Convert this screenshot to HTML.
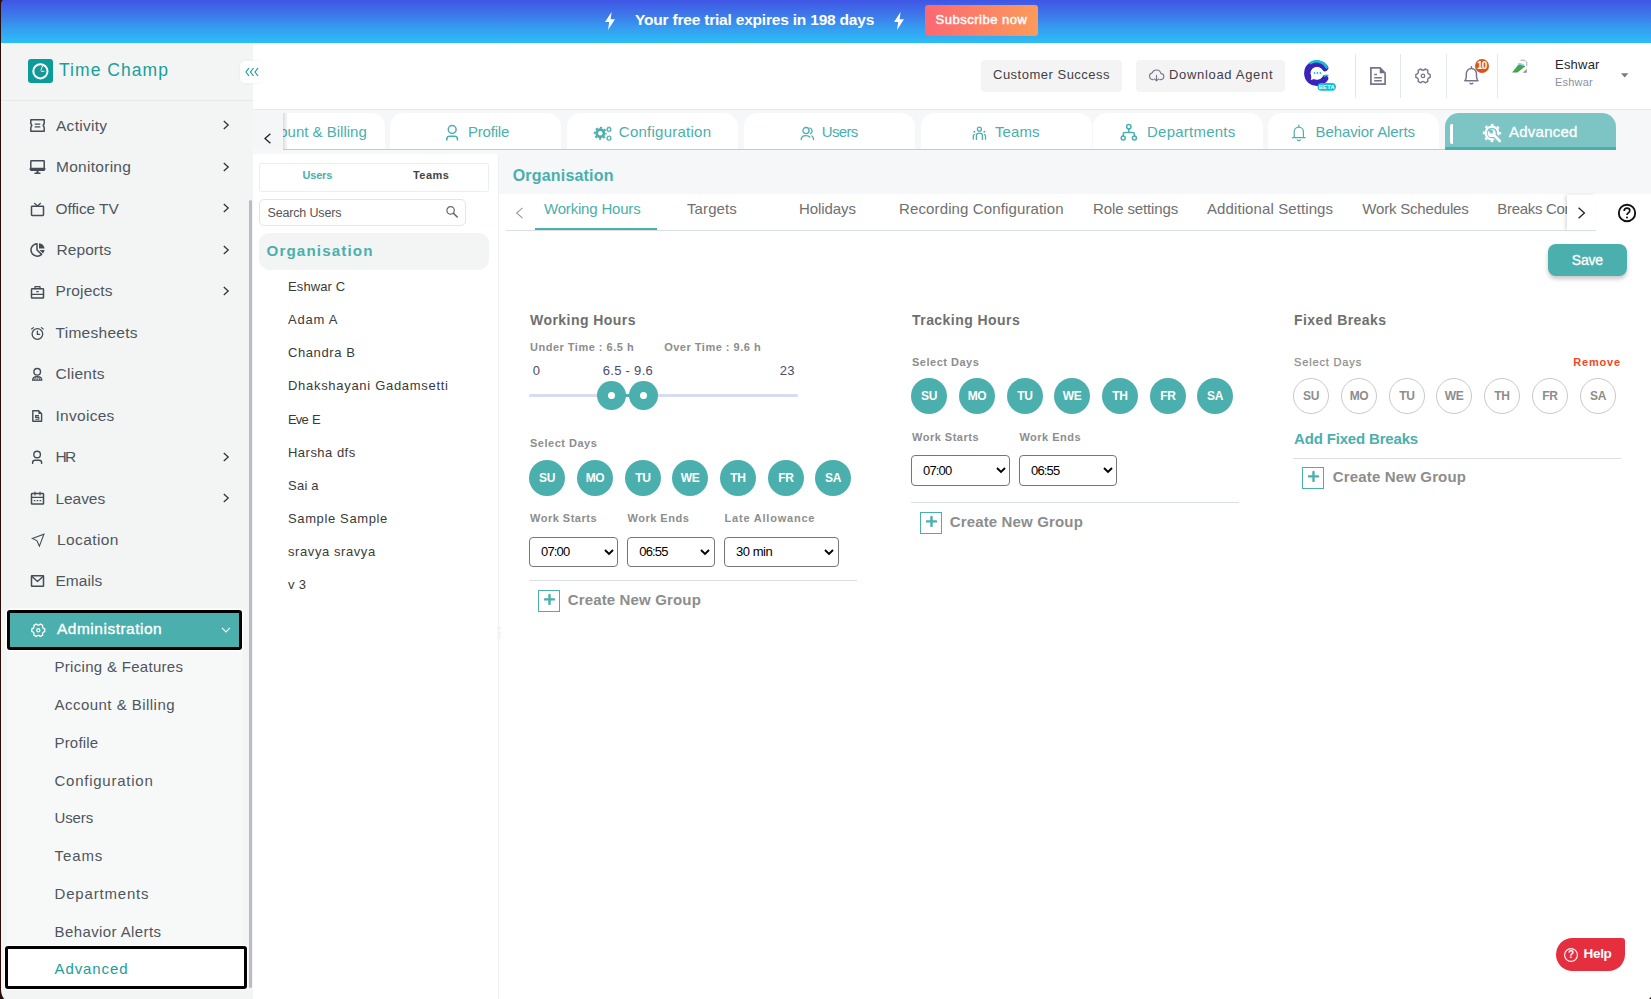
<!DOCTYPE html>
<html lang="en">
<head>
<meta charset="utf-8">
<title>Time Champ - Advanced</title>
<style>
*{box-sizing:border-box;margin:0;padding:0}
html,body{width:1651px;height:999px;overflow:hidden;background:#f6f7f9;font-family:"Liberation Sans",sans-serif;color:#4a4f57}
.abs,.abs *{position:absolute}
#root{position:relative;width:1651px;height:999px;overflow:hidden}
#root div,#root span,#root svg,#root a{position:absolute;white-space:nowrap}
.t{line-height:1;display:block}
/* banner */
#banner{left:0;top:0;width:1651px;height:43px;background:linear-gradient(180deg,#4055e4 0%,#3d78ea 35%,#369cf0 65%,#2bbef7 100%)}
#leftedge{left:0;top:0;width:1px;height:999px;background:#2a0d0b}
/* sidebar */
#sidebar{left:1px;top:43px;width:252px;height:956px;background:#f3f5f5}
#sbline{left:1px;top:100px;width:252px;height:1px;background:#e6e9ea}
.mi{left:56px;font-size:15.5px;letter-spacing:.28px;color:#4f555d}
.smi{left:54.5px;font-size:15px;letter-spacing:.35px;color:#4f555d}
.chev{left:222px;width:8px;height:10px}
/* header */
#header{left:253px;top:43px;width:1398px;height:66px;background:#fff}
#hline{left:253px;top:109px;width:1398px;height:1px;background:#e7eaee}
.hbtn{top:60px;height:32px;background:#f4f4f5;border-radius:4px}
.vdiv{top:54px;width:1px;height:44px;background:#e4e7e9}
/* tabs */
.tab{top:113px;height:37px;width:171px;background:#fff;border-radius:14px 14px 0 0}
.tabt{top:124.2px;font-size:15px;color:#4aafad;letter-spacing:.1px}
/* panels */
.gl{color:#8d8d8d;font-weight:700;font-size:11px;letter-spacing:.5px}
.sec{color:#6f6f6f;font-weight:700;font-size:14px;letter-spacing:.45px}
.day{width:36px;height:36px;border-radius:50%;background:#4aafad;color:#fff;font-weight:700;font-size:12px;text-align:center;line-height:36px;letter-spacing:-.3px}
.dayo{width:36px;height:36px;border-radius:50%;background:#fff;border:1px solid #c9c9c9;color:#8d8d8d;font-weight:700;font-size:12px;text-align:center;line-height:34px;letter-spacing:-.3px}
.sel{height:30px;border:1px solid #767676;border-radius:4px;background:#fff;font-size:13px;color:#000;line-height:27px;padding-left:11px;letter-spacing:-.85px}
.cng{color:#8d8d8d;font-weight:700;font-size:15px;letter-spacing:.15px}
.plus{width:22px;height:22px;border:1px solid #4aafad;background:#fff}
.hr{height:1px;background:#dcdfe1}
.usr{left:288px;font-size:13px;color:#3a3a3a;letter-spacing:.12px}
.stab{top:201.2px;font-size:15px;color:#707070;letter-spacing:-.15px}
</style>
</head>
<body>
<div id="root">
<div id="banner"></div>
<svg style="left:604px;top:12px" width="12" height="18" viewBox="0 0 12 18"><path d="M7.6 0 L1 10 H5.2 L4 18 L11 7.2 H6.6 Z" fill="#fff"/></svg>
<span class="t" style="left:635px;top:12px;font-size:15.5px;font-weight:700;color:#fff;letter-spacing:-.2px">Your free trial expires in 198 days</span>
<svg style="left:893px;top:12px" width="12" height="18" viewBox="0 0 12 18"><path d="M7.6 0 L1 10 H5.2 L4 18 L11 7.2 H6.6 Z" fill="#fff"/></svg>
<div style="left:925px;top:5px;width:113px;height:31px;border-radius:3px;background:linear-gradient(90deg,#fb6872,#fb9b5a)"></div>
<span class="t" style="left:935.6px;top:12.6px;font-size:13px;color:#fff;letter-spacing:.5px;-webkit-text-stroke:.45px #fff">Subscribe now</span>

<div id="sidebar"></div>
<div id="sbline"></div>
<div style="left:28px;top:59px;width:25px;height:24px;border-radius:3px;background:#0b9b99"></div>
<svg style="left:28px;top:59px" width="25" height="24" viewBox="0 0 25 24"><circle cx="12.4" cy="12.3" r="7.1" fill="none" stroke="#fff" stroke-width="2"/><path d="M12.4 12.3 L14.6 7 M12.4 12.3 H16.4" stroke="#fff" stroke-width=".9" fill="none"/><circle cx="12.3" cy="12.3" r="1" fill="#f0444c"/></svg>
<span class="t" style="left:59px;top:62.4px;font-size:17.5px;color:#1a9e9a;letter-spacing:1.05px">Time Champ</span>
<span class="t mi" style="left:56px;top:117.6px">Activity</span>
<svg style="left:222px;top:120.2px" width="8" height="10" viewBox="0 0 8 10" fill="none" stroke="#333" stroke-width="1.3"><path d="M1.8 1 L6.2 5 L1.8 9"/></svg>
<span class="t mi" style="left:56px;top:159.0px">Monitoring</span>
<svg style="left:222px;top:161.6px" width="8" height="10" viewBox="0 0 8 10" fill="none" stroke="#333" stroke-width="1.3"><path d="M1.8 1 L6.2 5 L1.8 9"/></svg>
<span class="t mi" style="left:55.5px;top:200.5px;letter-spacing:-0.1px">Office TV</span>
<svg style="left:222px;top:203.1px" width="8" height="10" viewBox="0 0 8 10" fill="none" stroke="#333" stroke-width="1.3"><path d="M1.8 1 L6.2 5 L1.8 9"/></svg>
<span class="t mi" style="left:56.5px;top:241.9px;letter-spacing:0.08px">Reports</span>
<svg style="left:222px;top:244.5px" width="8" height="10" viewBox="0 0 8 10" fill="none" stroke="#333" stroke-width="1.3"><path d="M1.8 1 L6.2 5 L1.8 9"/></svg>
<span class="t mi" style="left:55.5px;top:283.3px;letter-spacing:0.15px">Projects</span>
<svg style="left:222px;top:285.9px" width="8" height="10" viewBox="0 0 8 10" fill="none" stroke="#333" stroke-width="1.3"><path d="M1.8 1 L6.2 5 L1.8 9"/></svg>
<span class="t mi" style="left:55.5px;top:324.8px">Timesheets</span>
<span class="t mi" style="left:55.5px;top:366.2px">Clients</span>
<span class="t mi" style="left:55.5px;top:407.6px">Invoices</span>
<span class="t mi" style="left:55.5px;top:449.1px;letter-spacing:-1.6px">HR</span>
<svg style="left:222px;top:451.7px" width="8" height="10" viewBox="0 0 8 10" fill="none" stroke="#333" stroke-width="1.3"><path d="M1.8 1 L6.2 5 L1.8 9"/></svg>
<span class="t mi" style="left:55.5px;top:490.5px;letter-spacing:-0.07px">Leaves</span>
<svg style="left:222px;top:493.1px" width="8" height="10" viewBox="0 0 8 10" fill="none" stroke="#333" stroke-width="1.3"><path d="M1.8 1 L6.2 5 L1.8 9"/></svg>
<span class="t mi" style="left:57px;top:531.9px;letter-spacing:0.4px">Location</span>
<span class="t mi" style="left:55.5px;top:573.4px;letter-spacing:0.03px">Emails</span>
<svg style="left:29px;top:118px" width="17" height="15" viewBox="0 0 17 15" fill="none" stroke="#454c55" stroke-width="1.5" stroke-linejoin="round" stroke-linecap="round" ><path d="M1.8 1.8 H15.2 V5.6 Q13.4 7.5 15.2 9.4 V13.2 H1.8 V9.4 Q3.6 7.5 1.8 5.6 Z"/><path d="M6.2 6.1 H10.8 M6.2 8.9 H10.8" stroke-width="1.3"/></svg>
<svg style="left:29px;top:159px" width="17" height="16" viewBox="0 0 17 16" fill="none" stroke="#454c55" stroke-width="1.5" stroke-linejoin="round" stroke-linecap="round" ><rect x="1.8" y="1.8" width="13.4" height="9.4" rx=".5"/><path d="M1.8 10 H15.2" stroke-width="2.6"/><path d="M8.5 11 V14" stroke-width="2"/><path d="M6 14.3 H11" stroke-width="1.4"/></svg>
<svg style="left:29px;top:202px" width="17" height="15" viewBox="0 0 17 15" fill="none" stroke="#454c55" stroke-width="1.5" stroke-linejoin="round" stroke-linecap="round" ><rect x="2.5" y="4.2" width="12" height="9.2" rx=".6"/><path d="M5.5 1.3 L8.5 4 L11.5 1.3" stroke-width="1.2"/></svg>
<svg style="left:29px;top:242px" width="18" height="16" viewBox="0 0 18 16" fill="none" stroke="#454c55" stroke-width="1.5" stroke-linejoin="round" stroke-linecap="round" ><path d="M8 1.8 A6.2 6.2 0 1 0 12.6 12.4 L8 8 Z"/><path d="M10 1.2 A6.4 6.4 0 0 1 15.6 6.4 H10 Z M15.6 8 A6.4 6.4 0 0 1 14 11.4 L10.6 8 Z" fill="#454c55" stroke="none"/></svg>
<svg style="left:29px;top:285px" width="17" height="15" viewBox="0 0 17 15" fill="none" stroke="#454c55" stroke-width="1.5" stroke-linejoin="round" stroke-linecap="round" ><rect x="2.5" y="3.8" width="12" height="9.2" rx=".6"/><path d="M6 3.8 V1.7 H11 V3.8" stroke-width="1.3"/><path d="M2.5 9.3 H14.5" stroke-width="1.2"/><path d="M7.8 6.7 H9.2" stroke-width="1.3"/></svg>
<svg style="left:29px;top:326px" width="17" height="15" viewBox="0 0 17 15" fill="none" stroke="#454c55" stroke-width="1.5" stroke-linejoin="round" stroke-linecap="round" ><circle cx="8.4" cy="8" r="5.3" stroke-width="1.3"/><path d="M8.4 5.2 V8.4 H10.6" stroke-width="1.3"/><path d="M2.6 3 L4.4 1.6 M14.2 3 L12.4 1.6" stroke-width="1.2"/></svg>
<svg style="left:29px;top:366px" width="17" height="16" viewBox="0 0 17 16" fill="none" stroke="#454c55" stroke-width="1.5" stroke-linejoin="round" stroke-linecap="round" ><circle cx="8.2" cy="5.8" r="3.3" stroke-width="1.4"/><path d="M3.6 14.2 Q3.6 10.6 8.2 10.6 Q12.8 10.6 12.8 14.2 Z" stroke-width="1.3"/><path d="M8.2 10.8 V14 M6.6 11 L5.6 14 M9.8 11 L10.8 14" stroke-width=".9"/></svg>
<svg style="left:29px;top:409px" width="17" height="14" viewBox="0 0 17 14" fill="none" stroke="#454c55" stroke-width="1.5" stroke-linejoin="round" stroke-linecap="round" ><path d="M3.8 1.7 H9.6 L12.6 4.7 V12.3 H3.8 Z" stroke-width="1.4"/><path d="M9.4 1.8 V4.9 H12.5 Z" fill="#454c55" stroke="none"/><path d="M10 6.6 H6.6 V8.4 H9.8 V10.3 H6.4" stroke-width="1.1" stroke-linecap="butt" stroke-linejoin="miter"/></svg>
<svg style="left:29px;top:449px" width="17" height="16" viewBox="0 0 17 16" fill="none" stroke="#454c55" stroke-width="1.5" stroke-linejoin="round" stroke-linecap="round" ><circle cx="8.1" cy="5.5" r="3.3" stroke-width="1.4"/><path d="M3.6 14.4 V13.6 Q3.6 11.2 6 11.2 H10.2 Q12.6 11.2 12.6 13.6 V14.4" stroke-width="1.4"/></svg>
<svg style="left:29px;top:490px" width="17" height="16" viewBox="0 0 17 16" fill="none" stroke="#454c55" stroke-width="1.5" stroke-linejoin="round" stroke-linecap="round" ><rect x="2.5" y="3.6" width="12" height="10.4" rx=".6"/><path d="M2.5 7.4 H14.5" stroke-width="1.2"/><path d="M6 2 V5 M11 2 V5" stroke-width="1.2"/><path d="M5.3 10.7 H5.9 M8.2 10.7 H8.8 M11.1 10.7 H11.7" stroke-width="1.3"/></svg>
<svg style="left:30px;top:532px" width="16" height="16" viewBox="0 0 16 16" fill="none" stroke="#454c55" stroke-width="1.5" stroke-linejoin="round" stroke-linecap="round" ><path d="M2.3 6.4 L13.9 2.2 L9.4 14.1 L6.8 8.6 Z" stroke-width="1.1" stroke-linejoin="miter"/></svg>
<svg style="left:29px;top:573px" width="17" height="16" viewBox="0 0 17 16" fill="none" stroke="#454c55" stroke-width="1.5" stroke-linejoin="round" stroke-linecap="round" ><rect x="2.5" y="2.8" width="12" height="10.4" rx=".5"/><path d="M2.8 3.2 L8.5 8.4 L14.2 3.2" stroke-width="1.4"/></svg>
<div style="left:7px;top:650px;width:235px;height:296px;background:#f7f9f9"></div>
<div style="left:7px;top:610px;width:235px;height:40px;background:#4aafad;border:3px solid #000;border-radius:3px;box-shadow:0 0 0 1.5px rgba(255,255,255,.8)"></div>
<svg style="left:30px;top:622px" width="17" height="17" viewBox="0 0 17 17" fill="none" stroke="#fff" stroke-width="1.3" stroke-linejoin="round"><path d="M14.76 6.88 L14.76 9.62 Q11.85 10.30 12.72 13.15 L10.34 14.53 Q8.30 12.35 6.26 14.53 L3.88 13.15 Q4.75 10.30 1.84 9.62 L1.84 6.88 Q4.75 6.20 3.88 3.35 L6.26 1.97 Q8.30 4.15 10.34 1.97 L12.72 3.35 Q11.85 6.20 14.76 6.88 Z"/><circle cx="8.3" cy="8.25" r="1.6" stroke-width="1.2"/></svg>
<span class="t" style="left:57px;top:621.3px;font-size:15.5px;color:#fff;letter-spacing:.5px;-webkit-text-stroke:.35px #fff">Administration</span>
<svg style="left:221px;top:626px" width="10" height="8" viewBox="0 0 10 8" fill="none" stroke="#fff" stroke-width="1.1"><path d="M1 1.8 L5 6 L9 1.8"/></svg>
<span class="t smi" style="top:658.5px;letter-spacing:0.3px">Pricing &amp; Features</span>
<span class="t smi" style="top:697.3px;letter-spacing:0.47px">Account &amp; Billing</span>
<span class="t smi" style="top:735.1px;letter-spacing:0.18px">Profile</span>
<span class="t smi" style="top:772.5px;letter-spacing:0.75px">Configuration</span>
<span class="t smi" style="top:809.9px;letter-spacing:-0.13px">Users</span>
<span class="t smi" style="top:847.7px;letter-spacing:0.9px">Teams</span>
<span class="t smi" style="top:886.3px;letter-spacing:0.82px">Departments</span>
<span class="t smi" style="top:924.1px;letter-spacing:0.4px">Behavior Alerts</span>
<div style="left:5px;top:946px;width:242px;height:43px;background:#fff;border:3px solid #000;border-radius:3px;box-shadow:0 0 0 1px rgba(255,255,255,.85)"></div>
<span class="t smi" style="top:961px;color:#1a9e9a;letter-spacing:0.9px">Advanced</span>
<div style="left:249px;top:200px;width:3px;height:788px;background:#babac8;border-radius:2px"></div>

<div id="header"></div>
<div id="hline"></div>
<div class="hbtn" style="left:981px;width:141px"></div>
<span class="t" style="left:993px;top:67.5px;font-size:13px;color:#3f4047;letter-spacing:.5px">Customer Success</span>
<div class="hbtn" style="left:1136px;width:149px"></div>
<svg style="left:1148px;top:67px" width="17" height="16" viewBox="0 0 17 16" fill="none" stroke="#77778a" stroke-width="1.1" stroke-linecap="round" stroke-linejoin="round"><path d="M5.2 12.6 H4.6 A3.4 3.4 0 0 1 4.2 5.9 A4.6 4.6 0 0 1 13 6.6 A3 3 0 0 1 12.6 12.6 H11.8"/><path d="M8.5 8.2 V13.8 M6.4 11.8 L8.5 13.9 L10.6 11.8"/></svg>
<span class="t" style="left:1169px;top:67.5px;font-size:13px;color:#3f4047;letter-spacing:.68px">Download Agent</span>
<!-- chat icon -->
<svg style="left:1295px;top:52px" width="50" height="45" viewBox="0 0 50 45">
<path d="M30 15.9 A9.6 9.6 0 1 0 30 26.5" fill="none" stroke="#3a22bd" stroke-width="6.6" stroke-linecap="round"/>
<path d="M15.6 11 A11.4 11.4 0 0 1 31.6 15.4" fill="none" stroke="#12c0d2" stroke-width="2.6" stroke-linecap="round"/>
<path d="M29.6 24.2 Q31 22.6 32.8 23.6" fill="none" stroke="#12c0d2" stroke-width="1.6" stroke-linecap="round"/>
<circle cx="22" cy="21.2" r="6.3" fill="#fff"/><path d="M16.6 23.5 L15.8 28 L20 26.8 Z" fill="#fff"/>
<circle cx="19.6" cy="21" r=".9" fill="#12c0d2"/><circle cx="22.5" cy="21" r=".9" fill="#12c0d2"/><circle cx="25.4" cy="21" r=".9" fill="#12c0d2"/>
<rect x="22.5" y="30.9" width="18.5" height="7.8" rx="3.9" fill="#12c3d5"/>
<text x="31.8" y="36.9" font-family="Liberation Sans, sans-serif" font-size="5.6" font-weight="700" fill="#fff" text-anchor="middle" letter-spacing=".35">BETA</text>
</svg>
<div class="vdiv" style="left:1355px"></div>
<div class="vdiv" style="left:1400px"></div>
<div class="vdiv" style="left:1446px"></div>
<div class="vdiv" style="left:1497px"></div>
<svg style="left:1369px;top:66px" width="18" height="20" viewBox="0 0 18 20" fill="none" stroke="#74768a" stroke-width="1.7" stroke-linejoin="miter"><path d="M1.9 1.9 H11 L16.1 7 V18.1 H1.9 Z"/><path d="M11 1.9 V7 H16.1 Z" fill="#6c6c80" stroke-width=".6"/><path d="M5.2 8.6 H8 M5.2 11.8 H12.8 M5.2 14.8 H12.8" stroke-width="1.5"/></svg>
<svg style="left:1414px;top:67px" width="18" height="18" viewBox="0 0 18 18" fill="none" stroke="#74768a" stroke-width="1.4" stroke-linejoin="round"><path d="M16.14 7.38 L16.14 10.42 Q12.81 11.10 13.88 14.32 L11.26 15.84 Q9.00 13.30 6.74 15.84 L4.12 14.32 Q5.19 11.10 1.86 10.42 L1.86 7.38 Q5.19 6.70 4.12 3.48 L6.74 1.96 Q9.00 4.50 11.26 1.96 L13.88 3.48 Q12.81 6.70 16.14 7.38 Z"/><circle cx="9" cy="8.9" r="1.7" stroke-width="1.3"/></svg>
<svg style="left:1462px;top:65px" width="20" height="22" viewBox="0 0 20 22" fill="none" stroke="#74768a" stroke-width="1.5" stroke-linejoin="round" stroke-linecap="round"><path d="M9.4 1.7 V3"/><path d="M2.8 15.7 Q4.3 14.2 4.3 11.6 V8.7 A5.1 5.1 0 0 1 14.5 8.7 V11.6 Q14.5 14.2 16 15.7 Z"/><path d="M8 18.2 Q9.4 19.5 10.8 18.2" stroke-width="1.4"/></svg>
<div style="left:1475px;top:58.5px;width:14.4px;height:14.4px;border-radius:50%;background:#d9541e"></div>
<span class="t" style="left:1475px;top:60.8px;width:14.4px;text-align:center;font-size:10px;font-weight:700;color:#fff;letter-spacing:-.7px;text-indent:-.7px">10</span>
<!-- broken image icon -->
<svg style="left:1511px;top:59px" width="17" height="15" viewBox="0 0 17 15"><path d="M9.5 1.2 H13.6 L15.8 3.4 V7" fill="none" stroke="#9aa0a6" stroke-width=".9"/><path d="M1 13.6 L7.5 5.6 Q9 4.4 10.6 5.2 L14.4 7.2 L6.5 13.6 Z" fill="#3fa84a"/><path d="M6.5 4.8 Q8.5 3.2 11 4.4 L13.6 5.8 L12 7 L9.8 5.9 Q8.4 5.3 7.2 6.2 Z" fill="#a8c4ee"/><path d="M11.6 13.8 L15.8 10 V13.8 Z" fill="#8a9099"/></svg>
<span class="t" style="left:1555px;top:58.3px;font-size:13px;color:#26272b;letter-spacing:.22px">Eshwar</span>
<span class="t" style="left:1555px;top:77px;font-size:11px;color:#8a90a4;letter-spacing:.2px">Eshwar</span>
<svg style="left:1621px;top:73px" width="8" height="5" viewBox="0 0 8 5"><path d="M0 .3 H7.4 L3.7 4.6 Z" fill="#7b7b7b"/></svg>

<div style="left:283px;top:148.5px;width:1333px;height:1.5px;background:#a5d8d6"></div>
<div class="tab" style="left:262px;width:123px;height:36px;border-radius:0 14px 0 0"></div>
<div class="tab" style="left:390px;width:171px;height:36px"></div>
<div class="tab" style="left:567px;width:171px;height:36px"></div>
<div class="tab" style="left:744px;width:171px;height:36px"></div>
<div class="tab" style="left:921px;width:171px;height:36px"></div>
<div class="tab" style="left:1093px;width:170px;height:36px"></div>
<div class="tab" style="left:1268px;width:171px;height:36px"></div>
<div style="left:1445px;top:113px;width:171px;height:37px;background:#7cc5c4;border-radius:14px 14px 0 0;border-bottom:3px solid #4aafad"></div>
<div style="left:1449.5px;top:124px;width:3.5px;height:20px;background:#fff;border-radius:2px 0 0 2px"></div>
<span class="t tabt" style="left:254.2px;letter-spacing:0.0px;color:#4aafad;">Account &amp; Billing</span>
<span class="t tabt" style="left:468px;letter-spacing:-0.2px;color:#4aafad;">Profile</span>
<span class="t tabt" style="left:618.8px;letter-spacing:0.25px;color:#4aafad;">Configuration</span>
<span class="t tabt" style="left:821.8px;letter-spacing:-0.65px;color:#4aafad;">Users</span>
<span class="t tabt" style="left:995px;letter-spacing:0.1px;color:#4aafad;">Teams</span>
<span class="t tabt" style="left:1147px;letter-spacing:0.24px;color:#4aafad;">Departments</span>
<span class="t tabt" style="left:1315.5px;letter-spacing:-0.1px;color:#4aafad;">Behavior Alerts</span>
<span class="t tabt" style="left:1509px;letter-spacing:0.25px;color:#fff;-webkit-text-stroke:.3px #fff">Advanced</span>
<svg style="left:445px;top:123px" width="16" height="19" viewBox="0 0 16 19" fill="none" stroke="#4aafad" stroke-width="1.5" stroke-linecap="round" stroke-linejoin="round"><circle cx="7.2" cy="6.5" r="3.9"/><path d="M1.8 17 V16.2 Q1.8 13.3 4.7 13.3 H9.6 Q12.5 13.3 12.5 16.2 V17"/></svg>
<svg style="left:593px;top:123px" width="20" height="20" viewBox="0 0 20 20" fill="none" stroke="#4aafad"><circle cx="7.3" cy="10.3" r="3.65" stroke-width="2.7"/><circle cx="7.3" cy="10.3" r="5.6" stroke-width="1.8" stroke-dasharray="2.2 2.198" stroke-dashoffset="1.1"/><circle cx="16" cy="6.4" r="1.75" stroke-width="1.1"/><circle cx="16" cy="6.4" r="2.6" stroke-width="1" stroke-dasharray="1 1.042" stroke-dashoffset=".5"/><circle cx="16" cy="15.2" r="1.75" stroke-width="1.1"/><circle cx="16" cy="15.2" r="2.6" stroke-width="1" stroke-dasharray="1 1.042" stroke-dashoffset=".5"/></svg>
<svg style="left:800px;top:125px" width="16" height="16" viewBox="0 0 16 16" fill="none" stroke="#4aafad" stroke-width="1.3" stroke-linecap="round" stroke-linejoin="round"><circle cx="6" cy="5.6" r="3.1"/><path d="M1.2 14.6 Q1.2 10.6 6 10.6 Q8.6 10.6 9.8 12"/><path d="M10 3 A3 3 0 0 1 10.4 8.6 M12 11 Q13.6 12.2 13.6 14.6"/></svg>
<svg style="left:972px;top:125px" width="16" height="16" viewBox="0 0 16 16" fill="none" stroke="#4aafad" stroke-width="1.3" stroke-linecap="round" stroke-linejoin="round"><circle cx="7.4" cy="4.2" r="2"/><path d="M4.4 14.4 V10.6 Q4.4 8.2 7.4 8.2 Q10.4 8.2 10.4 10.6 V14.4"/><circle cx="2.4" cy="6.8" r="1" fill="#4aafad" stroke="none"/><circle cx="12.4" cy="6.8" r="1" fill="#4aafad" stroke="none"/><path d="M1.3 14.2 V11 Q1.3 9.8 2.4 9.6 M13.5 14.2 V11 Q13.5 9.8 12.4 9.6"/></svg>
<svg style="left:1120px;top:123px" width="18" height="19" viewBox="0 0 18 19" fill="none" stroke="#4aafad" stroke-width="1.5" stroke-linecap="round" stroke-linejoin="round"><circle cx="8.8" cy="3.8" r="2.2"/><circle cx="3.2" cy="15" r="2"/><circle cx="14.4" cy="15" r="2"/><path d="M8.8 6 V9.6 M3.2 13 V11.2 Q3.2 9.6 4.8 9.6 H12.8 Q14.4 9.6 14.4 11.2 V13"/></svg>
<svg style="left:1291px;top:123px" width="16" height="19" viewBox="0 0 16 19" fill="none" stroke="#4aafad" stroke-width="1.2" stroke-linecap="round" stroke-linejoin="round"><path d="M1.4 14.6 H14.2 M3.2 14.6 V8.8 A4.6 4.6 0 0 1 12.4 8.8 V14.6 M7.8 2.2 V4"/><path d="M6.2 16.8 Q7.8 18.4 9.4 16.8"/></svg>
<svg style="left:1481px;top:122px" width="22" height="22" viewBox="0 0 22 22" fill="none"><circle cx="11" cy="11" r="6.3" stroke="#fff" stroke-width="2.3"/><circle cx="11" cy="11" r="8.1" stroke="#fff" stroke-width="2.2" stroke-dasharray="2.7 3.662" stroke-dashoffset="1.35"/><path d="M12 12 L20 20" stroke="#7cc5c4" stroke-width="5.6"/><circle cx="10.7" cy="11.2" r="3.9" fill="#fff"/><circle cx="10.4" cy="9.7" r="1.9" fill="#7cc5c4"/><path d="M10.2 9.4 L7.2 7.2" stroke="#7cc5c4" stroke-width="2.6"/><path d="M12.6 12.8 L18.8 19" stroke="#fff" stroke-width="2.7" stroke-linecap="round"/></svg>
<div style="left:253px;top:112px;width:30px;height:38px;background:#f4f6f8"></div><div style="left:283px;top:113px;width:5px;height:36px;background:linear-gradient(90deg,rgba(0,0,0,.14),rgba(0,0,0,0))"></div>
<svg style="left:263px;top:133px" width="9" height="11" viewBox="0 0 9 11" fill="none" stroke="#222" stroke-width="1.3"><path d="M7.4 .8 L2 5.5 L7.4 10.2"/></svg>

<div style="left:253px;top:153.5px;width:245px;height:846px;background:#fff"></div>
<div style="left:498px;top:153.5px;width:1px;height:846px;background:#eef1f3"></div>
<div style="left:259px;top:163px;width:230px;height:29px;border:1px solid #eceff0;border-radius:2px;background:#fff"></div>
<span class="t" style="left:302.4px;top:169.7px;font-size:11px;font-weight:700;color:#4aafad;letter-spacing:-.15px">Users</span>
<span class="t" style="left:413px;top:169.7px;font-size:11px;font-weight:700;color:#444;letter-spacing:.45px">Teams</span>
<div style="left:259px;top:199px;width:207px;height:27px;border:1px solid #e2e5e6;border-radius:5px;background:#fff"></div>
<span class="t" style="left:267.5px;top:207.2px;font-size:12.5px;color:#555;letter-spacing:-.16px">Search Users</span>
<svg style="left:445px;top:205px" width="15" height="15" viewBox="0 0 15 15" fill="none" stroke="#666" stroke-linecap="round"><circle cx="5.6" cy="5.4" r="3.7" stroke-width="1.2"/><path d="M8.4 8.2 L12.2 12" stroke-width="1.6"/></svg>
<div style="left:259px;top:233px;width:230px;height:37px;border-radius:10px;background:#f3f5f5"></div>
<span class="t" style="left:266.5px;top:242.7px;font-size:15.2px;font-weight:700;color:#4aafad;letter-spacing:1.12px">Organisation</span>
<span class="t usr" style="top:279.8px;letter-spacing:0.12px">Eshwar C</span>
<span class="t usr" style="top:312.8px;letter-spacing:0.79px">Adam A</span>
<span class="t usr" style="top:345.8px;letter-spacing:0.59px">Chandra B</span>
<span class="t usr" style="top:378.8px;letter-spacing:0.7px">Dhakshayani Gadamsetti</span>
<span class="t usr" style="top:412.8px;letter-spacing:-.8px;word-spacing:1.2px">Eve E</span>
<span class="t usr" style="top:445.8px;letter-spacing:0.48px">Harsha dfs</span>
<span class="t usr" style="top:478.8px;letter-spacing:0.24px">Sai a</span>
<span class="t usr" style="top:511.8px;letter-spacing:0.63px">Sample Sample</span>
<span class="t usr" style="top:544.8px;letter-spacing:0.58px">sravya sravya</span>
<span class="t usr" style="top:577.8px;letter-spacing:0.32px">v 3</span>

<span class="t" style="left:512.7px;top:168px;font-size:16px;font-weight:700;color:#4aafad;letter-spacing:.19px">Organisation</span>
<div style="left:499px;top:194px;width:1152px;height:805px;background:#fff"></div>
<div style="left:506px;top:230px;width:1090px;height:1px;background:#dcdfe1"></div>
<svg style="left:515px;top:207px" width="9" height="12" viewBox="0 0 9 12" fill="none" stroke="#999" stroke-width="1.1"><path d="M7.6 .8 L1.6 6 L7.6 11.2"/></svg>
<span class="t stab" style="left:544px;letter-spacing:-0.19px;color:#4aafad">Working Hours</span>
<span class="t stab" style="left:687px;letter-spacing:0.1px;color:#707070">Targets</span>
<span class="t stab" style="left:799px;letter-spacing:-0.07px;color:#707070">Holidays</span>
<span class="t stab" style="left:899px;letter-spacing:.13px;color:#707070">Recording Configuration</span>
<span class="t stab" style="left:1093px;letter-spacing:-.12px;color:#707070">Role settings</span>
<span class="t stab" style="left:1207px;letter-spacing:0.1px;color:#707070">Additional Settings</span>
<span class="t stab" style="left:1362.3px;letter-spacing:-0.19px;color:#707070">Work Schedules</span>
<span class="t stab" style="left:1497.3px;letter-spacing:-.3px;color:#707070">Breaks Configuration</span>
<div style="left:535px;top:228px;width:122px;height:2px;background:#4aafad"></div>
<div style="left:1567px;top:195px;width:84px;height:35px;background:#fff"></div>
<div style="left:1567px;top:195px;width:29px;height:35px;background:#fff;box-shadow:-2px 0 3px rgba(0,0,0,.12)"></div>
<div style="left:1567px;top:230px;width:29px;height:1px;background:#dcdfe1"></div>
<svg style="left:1577px;top:207px" width="9" height="12" viewBox="0 0 9 12" fill="none" stroke="#222" stroke-width="1.3"><path d="M1.6 .8 L7.4 6 L1.6 11.2"/></svg>
<svg style="left:1616px;top:202px" width="22" height="22" viewBox="0 0 22 22" fill="none" stroke="#111" stroke-width="1.9"><circle cx="11" cy="11" r="8.2"/><path d="M8.2 8.9 Q8.2 6.2 11 6.2 Q13.8 6.2 13.8 8.6 Q13.8 10.2 12.2 11 Q11 11.7 11 13" stroke-width="1.7"/><circle cx="11" cy="15.6" r="1" fill="#111" stroke="none"/></svg>
<div style="left:1548px;top:244px;width:79px;height:31.5px;border-radius:8px;background:#4aafad;box-shadow:0 3px 4px rgba(0,0,0,.22)"></div>
<span class="t" style="left:1571.8px;top:253px;font-size:14px;color:#fff;letter-spacing:-.25px;-webkit-text-stroke:.3px #fff">Save</span>
<span class="t sec" style="left:530px;top:313.1px">Working Hours</span>
<span class="t gl" style="left:530px;top:341.6px">Under Time : 6.5 h</span>
<span class="t gl" style="left:664.2px;top:341.6px">Over Time : 9.6 h</span>
<span class="t" style="left:532.7px;top:363.6px;font-size:13px;color:#4b4b6b;letter-spacing:.3px">0</span>
<span class="t" style="left:602.7px;top:363.6px;font-size:13px;color:#4b4b6b;letter-spacing:.3px">6.5 - 9.6</span>
<span class="t" style="left:779.7px;top:363.6px;font-size:13px;color:#4b4b6b;letter-spacing:.3px">23</span>
<div style="left:529px;top:394px;width:269px;height:3px;border-radius:2px;background:#d9dcf0"></div>
<div style="left:611px;top:394px;width:33px;height:3px;background:#4aafad"></div>
<div style="left:597.0px;top:381.1px;width:28.8px;height:28.8px;border-radius:50%;background:#4aafad"></div>
<div style="left:607.8px;top:391.9px;width:7.2px;height:7.2px;border-radius:50%;background:#fff"></div>
<div style="left:629.2px;top:381.1px;width:28.8px;height:28.8px;border-radius:50%;background:#4aafad"></div>
<div style="left:640.0px;top:391.9px;width:7.2px;height:7.2px;border-radius:50%;background:#fff"></div>
<span class="t gl" style="left:530px;top:437.5px">Select Days</span>
<div class="day" style="left:529px;top:459.8px">SU</div>
<div class="day" style="left:577px;top:459.8px">MO</div>
<div class="day" style="left:625px;top:459.8px">TU</div>
<div class="day" style="left:672px;top:459.8px">WE</div>
<div class="day" style="left:720px;top:459.8px">TH</div>
<div class="day" style="left:768px;top:459.8px">FR</div>
<div class="day" style="left:815px;top:459.8px">SA</div>
<span class="t gl" style="left:530px;top:512.7px">Work Starts</span>
<span class="t gl" style="left:627.5px;top:512.7px">Work Ends</span>
<span class="t gl" style="left:724.6px;top:512.7px;letter-spacing:.78px">Late Allowance</span>
<div class="sel" style="left:529px;top:537px;width:89px">07:00</div>
<svg style="left:603.5px;top:549px" width="10" height="7" viewBox="0 0 10 7" fill="none" stroke="#000" stroke-width="1.9"><path d="M1 1 L5 5 L9 1"/></svg>
<div class="sel" style="left:627.3px;top:537px;width:87.5px">06:55</div>
<svg style="left:700.3px;top:549px" width="10" height="7" viewBox="0 0 10 7" fill="none" stroke="#000" stroke-width="1.9"><path d="M1 1 L5 5 L9 1"/></svg>
<div class="sel" style="left:724px;top:537px;width:114.6px;letter-spacing:-.45px">30 min</div>
<svg style="left:824.1px;top:549px" width="10" height="7" viewBox="0 0 10 7" fill="none" stroke="#000" stroke-width="1.9"><path d="M1 1 L5 5 L9 1"/></svg>
<div class="hr" style="left:529px;top:580px;width:328px"></div>
<div class="plus" style="left:538px;top:590px"></div>
<svg style="left:538px;top:590px" width="22" height="22" viewBox="0 0 22 22" stroke="#4aafad" stroke-width="2.4" stroke-linecap="round"><path d="M11.5 5 V13.9 M7 9.4 H16"/></svg>
<span class="t cng" style="left:567.7px;top:592.1px">Create New Group</span>
<span class="t sec" style="left:912px;top:313.3px">Tracking Hours</span>
<span class="t gl" style="left:912px;top:356.7px">Select Days</span>
<div class="day" style="left:911px;top:377.8px">SU</div>
<div class="day" style="left:959px;top:377.8px">MO</div>
<div class="day" style="left:1007px;top:377.8px">TU</div>
<div class="day" style="left:1054px;top:377.8px">WE</div>
<div class="day" style="left:1102px;top:377.8px">TH</div>
<div class="day" style="left:1150px;top:377.8px">FR</div>
<div class="day" style="left:1197px;top:377.8px">SA</div>
<span class="t gl" style="left:912px;top:431.9px">Work Starts</span>
<span class="t gl" style="left:1019.4px;top:431.9px">Work Ends</span>
<div class="sel" style="left:911px;top:455px;width:99px;height:31px;line-height:29px">07:00</div>
<svg style="left:995.5px;top:467px" width="10" height="7" viewBox="0 0 10 7" fill="none" stroke="#000" stroke-width="1.9"><path d="M1 1 L5 5 L9 1"/></svg>
<div class="sel" style="left:1019px;top:455px;width:98px;height:31px;line-height:29px">06:55</div>
<svg style="left:1102.5px;top:467px" width="10" height="7" viewBox="0 0 10 7" fill="none" stroke="#000" stroke-width="1.9"><path d="M1 1 L5 5 L9 1"/></svg>
<div class="hr" style="left:911px;top:502px;width:328px"></div>
<div class="plus" style="left:920px;top:511.5px"></div>
<svg style="left:920px;top:511.5px" width="22" height="22" viewBox="0 0 22 22" stroke="#4aafad" stroke-width="2.4" stroke-linecap="round"><path d="M11.5 5 V13.9 M7 9.4 H16"/></svg>
<span class="t cng" style="left:949.7px;top:514.3px">Create New Group</span>
<span class="t sec" style="left:1294px;top:313.0px">Fixed Breaks</span>
<span class="t gl" style="left:1294px;top:356.5px;font-weight:400;letter-spacing:.85px;-webkit-text-stroke:.25px #8d8d8d">Select Days</span>
<span class="t" style="left:1573.3px;top:356.5px;font-size:11px;font-weight:700;color:#f4471f;letter-spacing:.8px">Remove</span>
<div class="dayo" style="left:1293px;top:377.8px">SU</div>
<div class="dayo" style="left:1341px;top:377.8px">MO</div>
<div class="dayo" style="left:1389px;top:377.8px">TU</div>
<div class="dayo" style="left:1436px;top:377.8px">WE</div>
<div class="dayo" style="left:1484px;top:377.8px">TH</div>
<div class="dayo" style="left:1532px;top:377.8px">FR</div>
<div class="dayo" style="left:1580px;top:377.8px">SA</div>
<span class="t" style="left:1294px;top:431.1px;font-size:15px;font-weight:700;color:#4aafad;letter-spacing:-.17px">Add Fixed Breaks</span>
<div class="hr" style="left:1293px;top:458px;width:328px"></div>
<div class="plus" style="left:1302px;top:467px"></div>
<svg style="left:1302px;top:467px" width="22" height="22" viewBox="0 0 22 22" stroke="#4aafad" stroke-width="2.4" stroke-linecap="round"><path d="M11.5 5 V13.9 M7 9.4 H16"/></svg>
<span class="t cng" style="left:1332.8px;top:468.9px">Create New Group</span>
<div style="left:1556px;top:938px;width:69px;height:33px;background:#e52f3f;border-radius:16.5px 3px 16.5px 16.5px"></div>
<svg style="left:1563px;top:947px" width="16" height="16" viewBox="0 0 16 16" fill="none" stroke="#fff" stroke-width="1.1"><circle cx="8" cy="8" r="6.4"/></svg>
<span class="t" style="left:1563px;top:950.3px;width:16px;text-align:center;font-size:10px;font-weight:700;color:#fff">?</span>
<span class="t" style="left:1583.5px;top:947.1px;font-size:13.5px;font-weight:700;color:#fff;letter-spacing:-.3px">Help</span>

<div style="left:240px;top:61px;width:23px;height:22px;border-radius:5px;background:#fff;box-shadow:0 0 3px rgba(0,0,0,.06)"></div>
<svg style="left:245px;top:67px" width="14" height="10" viewBox="0 0 14 10" fill="none" stroke="#1a9e9a" stroke-width="1.2"><path d="M4 1 L1 5 L4 9 M8.5 1 L5.5 5 L8.5 9 M13 1 L10 5 L13 9"/></svg>
<div style="left:496.5px;top:626px;width:4px;height:4px;border-radius:50%;background:#f0f3f4"></div>
<div style="left:496.5px;top:630.5px;width:4px;height:4px;border-radius:50%;background:#f0f3f4"></div>
<div style="left:496.5px;top:635px;width:4px;height:4px;border-radius:50%;background:#f0f3f4"></div>
<svg style="left:0;top:989px" width="6" height="10" viewBox="0 0 6 10"><path d="M0 0 H1 Q1 6 4.2 10 H0 Z" fill="#2a1011"/></svg>
<svg style="left:0;top:0" width="4" height="4" viewBox="0 0 4 4"><path d="M0 0 H3 Q1 1 1 4 H0 Z" fill="#2a1011"/></svg>
<svg style="left:1648px;top:996px" width="3" height="3" viewBox="0 0 3 3"><path d="M3 .6 Q2.6 2.6 .8 3 H3 Z" fill="#2a1011"/></svg>
<div id="leftedge"></div>
</div>
</body>
</html>
